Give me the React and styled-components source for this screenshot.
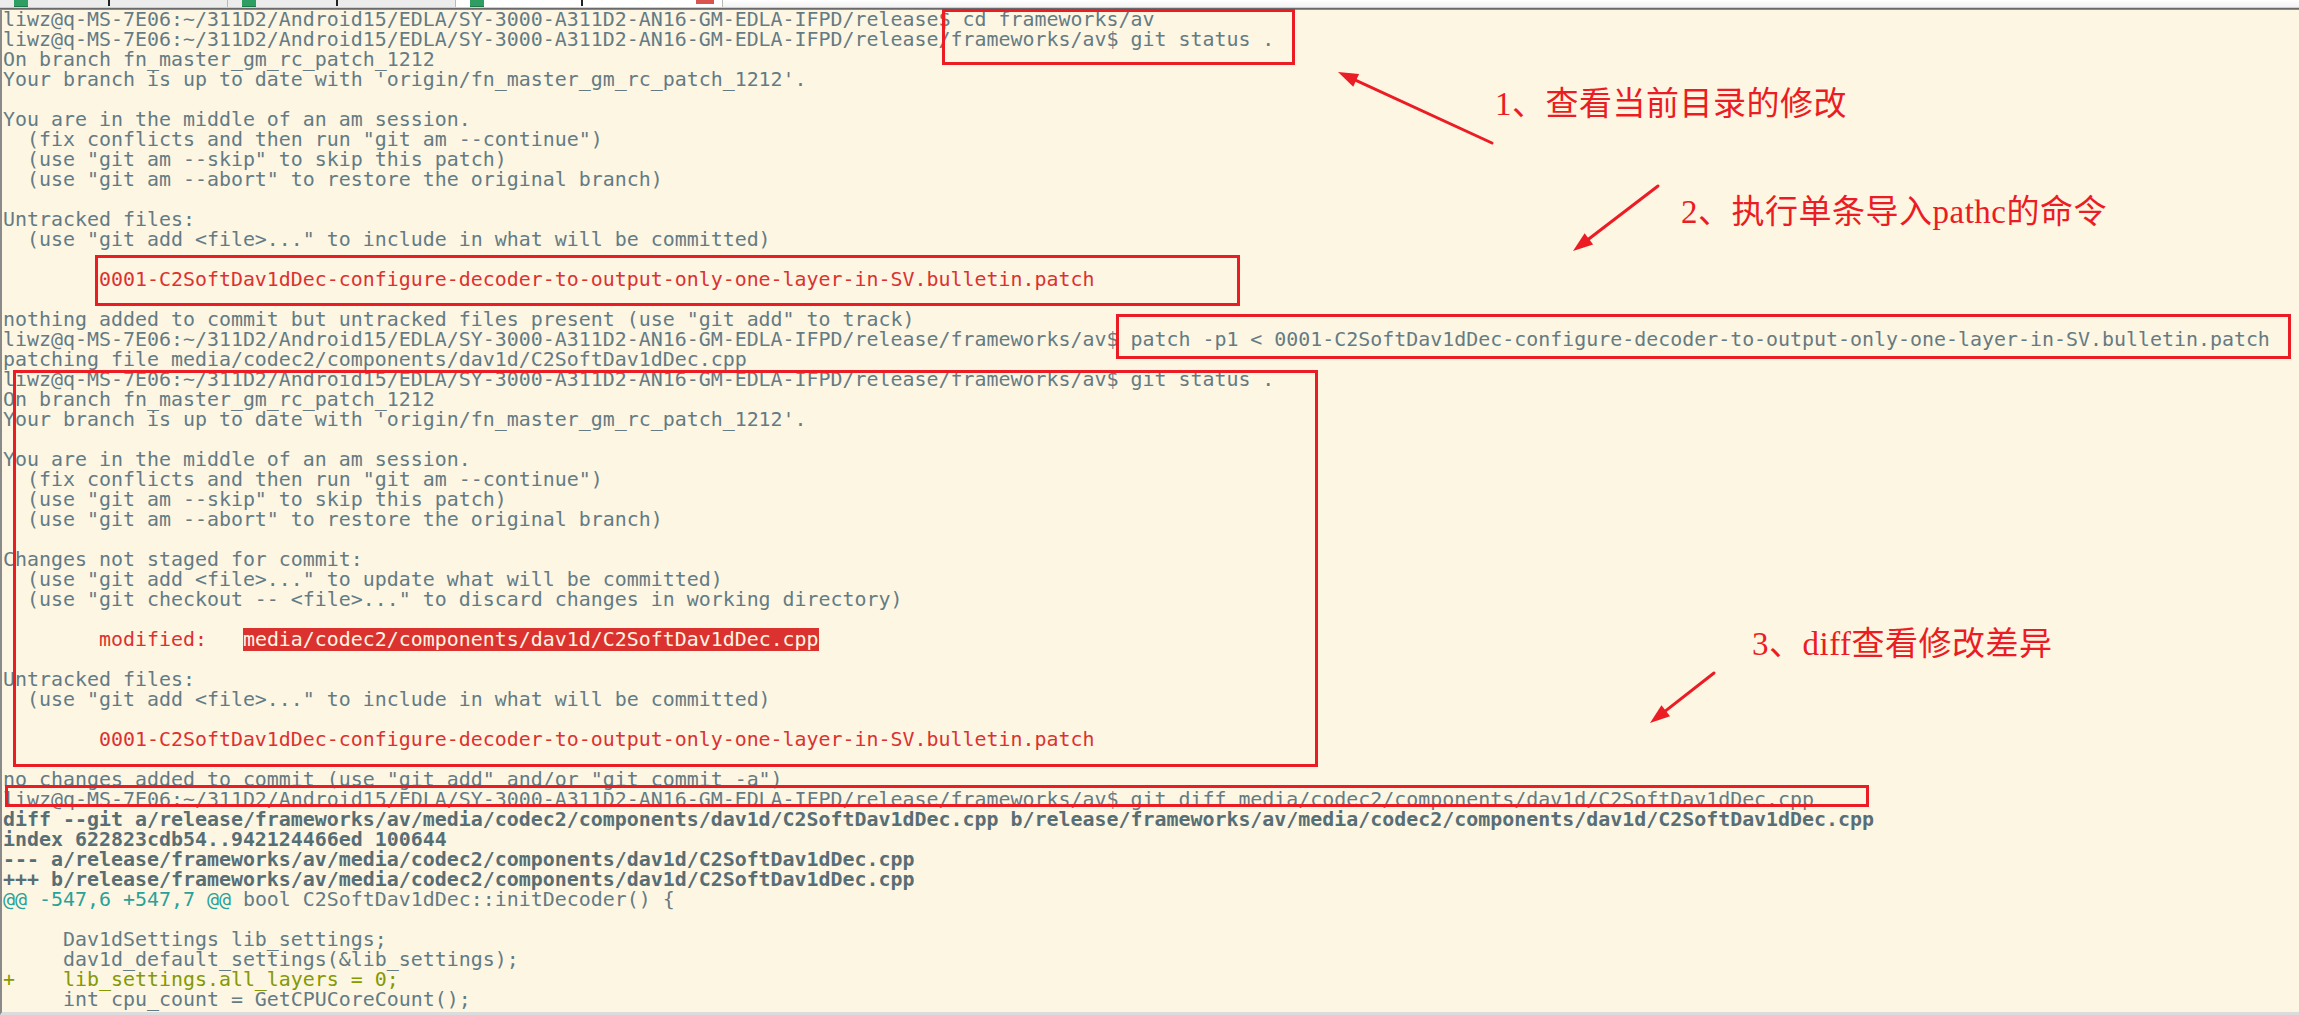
import React from "react";
import styled, { createGlobalStyle } from "styled-components";

const PROMPT =
  "liwz@q-MS-7E06:~/311D2/Android15/EDLA/SY-3000-A311D2-AN16-GM-EDLA-IFPD/release";
const PATCH =
  "0001-C2SoftDav1dDec-configure-decoder-to-output-only-one-layer-in-SV.bulletin.patch";
const FILE = "media/codec2/components/dav1d/C2SoftDav1dDec.cpp";
const SRC = "release/frameworks/av/" + FILE;

const t = (text, tone = "base") => ({ text, tone });

const amSession = [
  [t("You are in the middle of an am session.")],
  [t('  (fix conflicts and then run "git am --continue")')],
  [t('  (use "git am --skip" to skip this patch)')],
  [t('  (use "git am --abort" to restore the original branch)')],
  [],
];

const branch = [
  [t("On branch fn_master_gm_rc_patch_1212")],
  [t("Your branch is up to date with 'origin/fn_master_gm_rc_patch_1212'.")],
  [],
];

const lines = [
  [t(PROMPT + "$ cd frameworks/av")],
  [t(PROMPT + "/frameworks/av$ git status .")],
  ...branch,
  ...amSession,
  [t("Untracked files:")],
  [t('  (use "git add <file>..." to include in what will be committed)')],
  [],
  [t("        "), t(PATCH, "red")],
  [],
  [t('nothing added to commit but untracked files present (use "git add" to track)')],
  [t(PROMPT + "/frameworks/av$ patch -p1 < " + PATCH)],
  [t("patching file " + FILE)],
  [t(PROMPT + "/frameworks/av$ git status .")],
  ...branch,
  ...amSession,
  [t("Changes not staged for commit:")],
  [t('  (use "git add <file>..." to update what will be committed)')],
  [t('  (use "git checkout -- <file>..." to discard changes in working directory)')],
  [],
  [t("        "), t("modified:   ", "red"), t(FILE, "hl")],
  [],
  [t("Untracked files:")],
  [t('  (use "git add <file>..." to include in what will be committed)')],
  [],
  [t("        "), t(PATCH, "red")],
  [],
  [t('no changes added to commit (use "git add" and/or "git commit -a")')],
  [t(PROMPT + "/frameworks/av$ git diff " + FILE)],
  [t("diff --git a/" + SRC + " b/" + SRC, "bold")],
  [t("index 622823cdb54..942124466ed 100644", "bold")],
  [t("--- a/" + SRC, "bold")],
  [t("+++ b/" + SRC, "bold")],
  [t("@@ -547,6 +547,7 @@", "cyan"), t(" bool C2SoftDav1dDec::initDecoder() {")],
  [],
  [t("     Dav1dSettings lib_settings;")],
  [t("     dav1d_default_settings(&lib_settings);")],
  [t("+    lib_settings.all_layers = 0;", "green")],
  [t("     int cpu_count = GetCPUCoreCount();")],
];

// outer edges of the red marker boxes
const boxes = [
  [942, 9, 1295, 65],
  [95, 255, 1240, 306],
  [1116, 314, 2291, 359],
  [13, 370, 1318, 767],
  [5, 785, 1869, 807],
];

// tail -> tip
const arrows = [
  [1492, 143, 1338, 72],
  [1658, 186, 1573, 251],
  [1714, 673, 1650, 723],
];

const notes = [
  { x: 1495, y: 86, text: "1、查看当前目录的修改" },
  { x: 1681, y: 194, text: "2、执行单条导入pathc的命令" },
  { x: 1752, y: 626, text: "3、diff查看修改差异" },
];

const tabs = [
  { active: false, mark: 80 },
  { active: false, mark: 80 },
  { active: true, mark: 97, close: true },
];

const GlobalStyle = createGlobalStyle`
  html, body {
    margin: 0;
    padding: 0;
    background: #fdf6e3;
    overflow: hidden;
  }
`;

const Window = styled.div`
  position: relative;
  width: 2299px;
  height: 1015px;
  overflow: hidden;
  background: #fdf6e3;
  display: flex;
  flex-direction: column;
`;

const TabStrip = styled.div`
  display: flex;
  height: 7px;
  background: linear-gradient(#ffffff, #f3f3f3);
  border-bottom: 1px solid #cfcfcf;
  box-shadow: 0 1px 0 #6a6a6a, 0 2px 0 #8a8a8a;
  margin-bottom: 2px;
`;

const Tab = styled.div`
  width: ${(p) => (p.$active ? 252 : 213)}px;
  background: ${(p) => (p.$active ? "#ffffff" : "#ececec")};
  border-right: 1px solid #b9b9b9;
  display: flex;
  align-items: flex-start;
  padding-left: 14px;
`;

const TabIcon = styled.span`
  width: 14px;
  height: 6px;
  background: #2e9e62;
  border-bottom: 1px solid #1f7a48;
`;

const TabMark = styled.span`
  margin-left: ${(p) => p.$offset}px;
  width: 2px;
  height: 6px;
  background: #222;
`;

const TabClose = styled.span`
  margin-left: auto;
  margin-right: 8px;
  width: 18px;
  height: 4px;
  background: #d9534f;
`;

const Terminal = styled.div`
  flex: 1;
  border-left: 2px solid #8a8a8a;
  border-bottom: 3px solid #dcdcdc;
  padding-left: 1px;
  font-family: "DejaVu Sans Mono", "Liberation Mono", monospace;
  font-size: 19.93px;
  line-height: 20px;
  color: #657b83;
  white-space: pre;
`;

const Line = styled.div`
  height: 20px;
`;

const tones = {
  base: "color: #657b83;",
  red: "color: #dc322f;",
  hl: "color: #fdf6e3; background: #dc322f;",
  bold: "color: #586e75; font-weight: bold;",
  cyan: "color: #2aa198;",
  green: "color: #859900;",
};

const Seg = styled.span`
  ${(p) => tones[p.$tone]}
`;

const Marks = styled.svg`
  position: absolute;
  top: 0;
  left: 0;
  pointer-events: none;
`;

const Note = styled.div`
  position: absolute;
  left: ${(p) => p.$x}px;
  top: ${(p) => p.$y}px;
  font-family: "Liberation Serif", "Noto Sans CJK SC", serif;
  font-size: 33px;
  line-height: 36px;
  letter-spacing: 0.5px;
  color: #ec1c24;
  white-space: nowrap;
`;

const RED = "#ec1c24";

function arrowHead(x1, y1, x2, y2) {
  const dx = x2 - x1;
  const dy = y2 - y1;
  const len = Math.hypot(dx, dy);
  const ux = dx / len;
  const uy = dy / len;
  const bx = x2 - ux * 20;
  const by = y2 - uy * 20;
  const px = -uy * 7;
  const py = ux * 7;
  return `${x2},${y2} ${bx + px},${by + py} ${bx - px},${by - py}`;
}

const App = () => {
  return (
    <>
      <GlobalStyle />
      <Window>
        <TabStrip>
          {tabs.map((tab, i) => (
            <Tab key={i} $active={tab.active}>
              <TabIcon />
              <TabMark $offset={tab.mark} />
              {tab.close && <TabClose />}
            </Tab>
          ))}
        </TabStrip>
        <Terminal>
          {lines.map((segs, i) => (
            <Line key={i}>
              {segs.map((s, j) => (
                <Seg key={j} $tone={s.tone}>
                  {s.text}
                </Seg>
              ))}
            </Line>
          ))}
        </Terminal>

        <Marks width="2299" height="1015" viewBox="0 0 2299 1015">
          {boxes.map(([x1, y1, x2, y2], i) => (
            <rect
              key={i}
              x={x1 + 1.5}
              y={y1 + 1.5}
              width={x2 - x1 - 3}
              height={y2 - y1 - 3}
              fill="none"
              stroke={RED}
              strokeWidth="3"
            />
          ))}
          {arrows.map(([x1, y1, x2, y2], i) => {
            const len = Math.hypot(x2 - x1, y2 - y1);
            const ex = x2 - ((x2 - x1) / len) * 12;
            const ey = y2 - ((y2 - y1) / len) * 12;
            return (
              <g key={i}>
                <line
                  x1={x1}
                  y1={y1}
                  x2={ex}
                  y2={ey}
                  stroke={RED}
                  strokeWidth="3"
                  strokeLinecap="round"
                />
                <polygon points={arrowHead(x1, y1, x2, y2)} fill={RED} />
              </g>
            );
          })}
        </Marks>

        {notes.map((n, i) => (
          <Note key={i} $x={n.x} $y={n.y}>
            {n.text}
          </Note>
        ))}
      </Window>
    </>
  );
};

export default App;
